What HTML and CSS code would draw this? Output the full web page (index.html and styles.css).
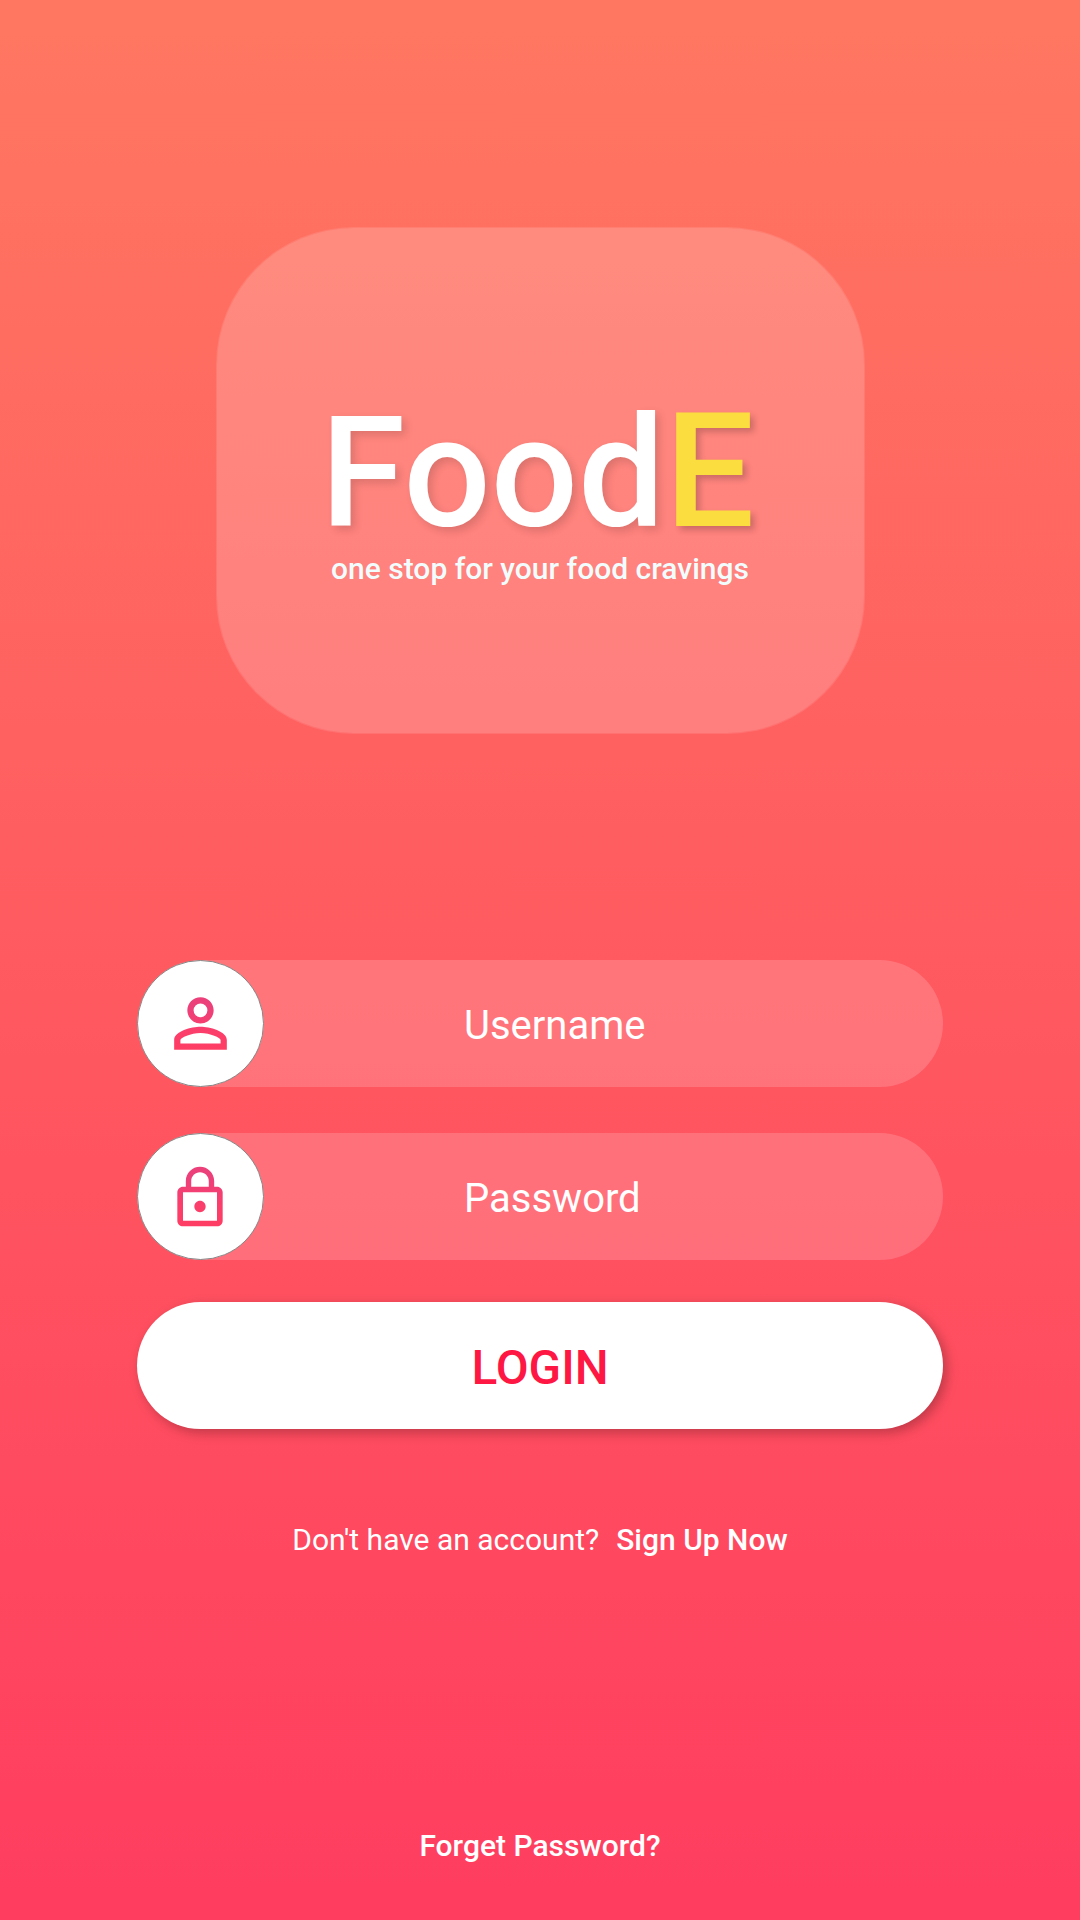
FILE: index.html
```html
<!DOCTYPE html>
<html lang="en">
<head>
<meta charset="utf-8">
<title>FoodE</title>
<link rel="stylesheet" href="styles.css">
</head>
<body>
<main class="screen">
  <header class="brand">
    <h1 class="logo">Food<span class="accent">E</span></h1>
    <p class="tagline">one stop for your food cravings</p>
  </header>
  <form class="form">
    <div class="field">
      <span class="icon"><svg class="person" viewBox="0 0 24 24"><defs><linearGradient id="pink" x1="0" y1="0" x2="0" y2="1"><stop offset="0.2" stop-color="#ec407a"/><stop offset="0.65" stop-color="#fb3e6b"/><stop offset="1" stop-color="#ff3d64"/></linearGradient></defs><path fill="url(#pink)" d="M12 5.9a2.1 2.1 0 1 1 0 4.2 2.1 2.1 0 0 1 0-4.2m0 9c2.97 0 6.1 1.46 6.1 2.1v1.1H5.9V17c0-.64 3.13-2.1 6.1-2.1M12 4C9.79 4 8 5.79 8 8s1.79 4 4 4 4-1.79 4-4-1.79-4-4-4zm0 9c-2.67 0-8 1.34-8 4v3h16v-3c0-2.66-5.33-4-8-4z"/></svg></span>
      <span class="placeholder">Username</span>
    </div>
    <div class="field">
      <span class="icon"><svg class="lock" viewBox="0 0 24 24"><path fill="url(#pink)" d="M12 17c1.1 0 2-.9 2-2s-.9-2-2-2-2 .9-2 2 .9 2 2 2zm6-9h-1V6c0-2.76-2.24-5-5-5S7 3.24 7 6v2H6c-1.1 0-2 .9-2 2v10c0 1.1.9 2 2 2h12c1.1 0 2-.9 2-2V10c0-1.1-.9-2-2-2zM8.9 6c0-1.71 1.39-3.1 3.1-3.1s3.1 1.39 3.1 3.1v2H8.9V6zM18 20H6V10h12v10z"/></svg></span>
      <span class="placeholder">Password</span>
    </div>
    <button class="login" type="button">LOGIN</button>
  </form>
  <p class="signup">Don't have an account?<strong>Sign Up Now</strong></p>
  <p class="forgot">Forget Password?</p>
</main>
</body>
</html>
```
FILE: styles.css
```css
* { box-sizing: border-box; margin: 0; padding: 0; }
body { font-family: Roboto, sans-serif; color: #fff; }
.screen {
  width: 1080px; height: 1920px; padding-top: 227px;
  display: flex; flex-direction: column; align-items: center;
  background: linear-gradient(#ff7761, #ff3d5f);
}
.brand {
  width: 649px; height: 507px; padding-top: 173px; border-radius: 138px;
  border: 1px solid rgba(255,255,255,.1);
  background: rgba(255,255,255,.19) padding-box;
  display: flex; flex-direction: column; align-items: center;
}
.logo {
  display: flex; align-items: baseline; margin-right: 5px;
  font-size: 153.8px; line-height: 140px; font-weight: 500; white-space: nowrap;
  text-shadow: 4px 4px 8px rgba(0,0,0,.14);
}
.accent { color: #fbdd40; font-size: 159px; padding-top: 1px; text-shadow: 4px 4px 6px rgba(0,0,0,.2); }
.tagline { margin-top: 7px; font-size: 30px; line-height: 36px; font-weight: 500; color: #f1fdfd; }
.form { width: 806px; margin-top: 226px; }
.field {
  height: 127px; margin-bottom: 46px; border-radius: 64px;
  background: rgba(255,255,255,.17); display: flex; align-items: center;
}
.icon {
  width: 127px; height: 127px; border-radius: 50%; background: #fff;
  border: 1px solid #888; display: flex; align-items: center; justify-content: center;
}
.person { width: 79px; height: 79px; }
.lock { width: 68px; height: 68px; margin: 2px 1px 0 0; }
.placeholder { margin-left: 200px; padding-top: 4px; font-size: 40px; line-height: 48px; }
.login {
  display: block; width: 806px; height: 127px; margin-top: -4px; padding-top: 5px; border: 0; border-radius: 64px;
  background: #fff; color: #ff1744; font: 500 47.8px/56px Roboto, sans-serif;
  box-shadow: 4px 4px 12px rgba(0,0,0,.25);
}
.signup { margin-top: 93px; font-size: 30px; line-height: 36px; display: flex; gap: 17px; }
.signup strong { font-weight: 500; }
.forgot { margin-top: 270px; font-size: 30px; line-height: 36px; font-weight: 500; }
```
